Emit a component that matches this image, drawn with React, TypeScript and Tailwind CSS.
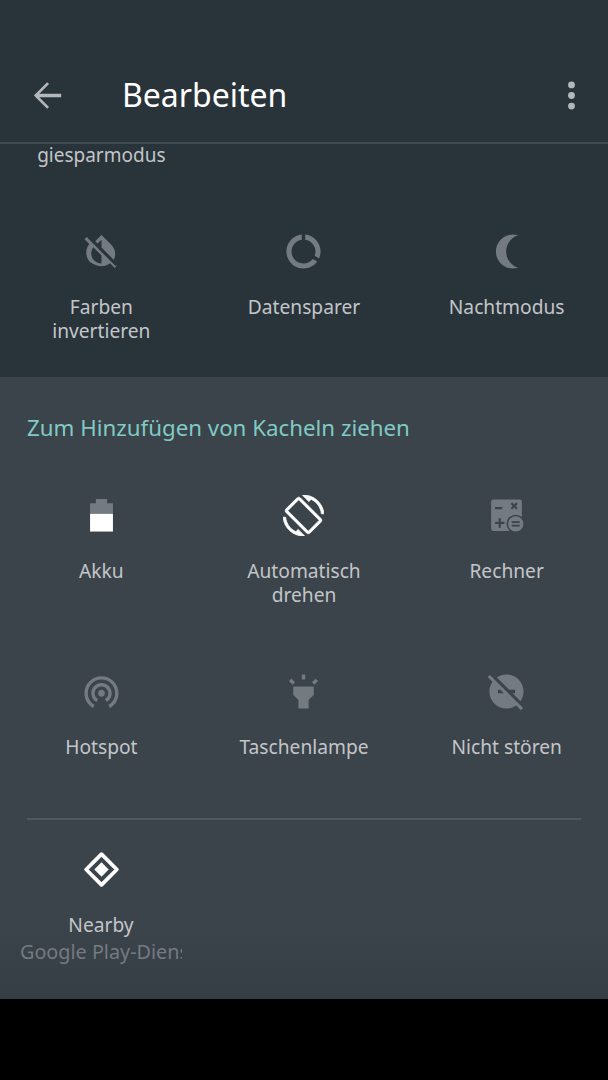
import type { ReactNode } from "react";

const DIM = "#737b80";

function Icon({ children, className = "" }: { children: ReactNode; className?: string }) {
  return (
    <svg viewBox="0 0 24 24" fill={DIM} className={`h-[41px] w-[41px] shrink-0 ${className}`}>
      {children}
    </svg>
  );
}

function Tile({ icon, label }: { icon: ReactNode; label: string[] }) {
  return (
    <div className="flex h-[176px] flex-col items-center">
      <Icon>{icon}</Icon>
      <div className="mt-[23px] text-center text-[19.2px] leading-[24px] text-[#c3c6c8]">
        {label.map((line) => (
          <div key={line}>{line}</div>
        ))}
      </div>
    </div>
  );
}

const invertOff = (
  <path d="M20.65 20.87l-2.35-2.35-6.3-6.3-3.54-3.54-1.42-1.42-3.69-3.69-1.27 1.27 2.78 2.78c-2.55 3.14-2.36 7.76.56 10.69C7.9 19.9 9.95 20.68 12 20.68c1.79 0 3.57-.59 5.03-1.78l2.7 2.7L21 20.33l-.35-.46zM12 19.08c-1.6 0-3.11-.62-4.24-1.76C6.62 16.18 6 14.68 6 13.08c0-1.32.43-2.56 1.21-3.59L12 14.28v4.8zM12 5.1v4.58l7.25 7.26c1.37-2.96.84-6.57-1.6-9.01L12 2.27l-3.7 3.7 1.41 1.41L12 5.1z" />
);
const dataSaver = (
  <path d="M13 2.05v3.03c3.39.49 6 3.39 6 6.92 0 .9-.18 1.75-.48 2.54l2.6 1.53c.56-1.24.88-2.62.88-4.07 0-5.18-3.95-9.45-9-9.95zM12 19c-3.87 0-7-3.13-7-7 0-3.53 2.61-6.43 6-6.92V2.05c-5.06.5-9 4.76-9 9.95 0 5.52 4.47 10 9.99 10 3.31 0 6.24-1.61 8.06-4.09l-2.6-1.53C16.17 17.98 14.21 19 12 19z" />
);
const moon = (
  <path
    transform="matrix(-1 0 0 1 24.8 0)"
    d="M9 2c-1.05 0-2.05.16-3 .46 4.06 1.27 7 5.06 7 9.54 0 4.48-2.94 8.27-7 9.54.95.3 1.95.46 3 .46 5.52 0 10-4.48 10-10S14.52 2 9 2z"
  />
);
const battery = (
  <>
    <path d="M5.3 4.8h3.4V2.4h6.6v2.4h3.4v6.2H5.3z" />
    <path fill="#fff" d="M5.3 11h13.4v10.4H5.3z" />
  </>
);
const rotation = (
  <path
    fill="#fff"
    stroke="#fff"
    strokeWidth="0.45"
    d="M16.48 2.52c3.27 1.55 5.61 4.72 5.97 8.48h1.5C23.44 4.84 18.29 0 12 0l-.66.03 3.81 3.81 1.33-1.32zm-6.25-.77c-.59-.59-1.54-.59-2.12 0L1.75 8.11c-.59.59-.59 1.54 0 2.12l12.02 12.02c.59.59 1.54.59 2.12 0l6.36-6.36c.59-.59.59-1.54 0-2.12L10.23 1.75zm4.6 19.44L2.81 9.17l6.36-6.36 12.02 12.02-6.36 6.36zm-7.31.29C4.25 19.94 1.91 16.76 1.55 13H.05C.56 19.16 5.71 24 12 24l.66-.03-3.81-3.81-1.33 1.32z"
  />
);
const calculator = (
  <>
    <path d="M4.2 2.6h15.6a1.2 1.2 0 0 1 1.2 1.2V14h-7v7H4.2A1.2 1.2 0 0 1 3 19.8V3.8a1.2 1.2 0 0 1 1.2-1.2z" />
    <circle cx="17.4" cy="16.9" r="5.4" fill="#3b434b" />
    <circle cx="17.4" cy="16.9" r="4.5" />
    <path
      fill="#3b434b"
      d="M15.1 15.4h4.6v1h-4.6zM15.1 17.4h4.6v1h-4.6zM5.3 7h4.2v1.3H5.3zM5.3 15.7h2.1v-2.1h1.3v2.1h2.1V17H8.7v2.1H7.4V17H5.3zM14.4 5.2l.9-.9 1.2 1.2 1.2-1.2.9.9-1.2 1.2 1.2 1.2-.9.9-1.2-1.2-1.2 1.2-.9-.9 1.2-1.2z"
    />
  </>
);
const hotspot = (
  <path d="M12 11c-1.1 0-2 .9-2 2s.9 2 2 2 2-.9 2-2-.9-2-2-2zm6 2c0-3.31-2.69-6-6-6s-6 2.69-6 6c0 2.22 1.21 4.15 3 5.19l1-1.74c-1.19-.7-2-1.97-2-3.45 0-2.21 1.79-4 4-4s4 1.79 4 4c0 1.48-.81 2.75-2 3.45l1 1.74c1.79-1.04 3-2.97 3-5.19zM12 3C6.48 3 2 7.48 2 13c0 3.7 2.01 6.92 4.99 8.65l1-1.73C5.61 18.53 4 15.96 4 13c0-4.42 3.58-8 8-8s8 3.58 8 8c0 2.96-1.61 5.53-4 6.92l1 1.73c2.99-1.73 5-4.95 5-8.65 0-5.52-4.48-10-10-10z" />
);
const flashlight = (
  <path d="M6 14l3 3v5h6v-5l3-3V9H6v5zm5-12h2v3h-2V2zM3.5 5.875L4.914 4.46l2.12 2.122L5.62 7.997zm13.46.71l2.123-2.12 1.414 1.414L18.375 8z" />
);
const dndOff = (
  <path d="M17 11v2h-1.46l4.68 4.68C21.34 16.07 22 14.11 22 12c0-5.52-4.48-10-10-10-2.11 0-4.07.66-5.68 1.78L13.54 11H17zM2.27 2.27L1 3.54l2.78 2.78C2.66 7.93 2 9.89 2 12c0 5.52 4.48 10 10 10 2.11 0 4.07-.66 5.68-1.78L20.46 23l1.27-1.27L11 11 2.27 2.27zM7 13v-2h1.46l2 2H7z" />
);
const nearby = (
  <>
    <path d="M12 3L21 12 12 21 3 12z" fill="none" stroke="#fff" strokeWidth="2.2" strokeLinejoin="round" />
    <path d="M12 7.8L16.2 12 12 16.2 7.8 12z" fill="#fff" />
  </>
);

export default function App() {
  return (
    <div className="flex h-[1080px] w-[608px] flex-col overflow-hidden bg-black font-['Noto_Sans',sans-serif]">
      <div className="h-[377px] bg-[#29333a]">
        <header className="flex h-[144px] items-center border-b-2 border-[#424b51] pt-[48px]">
          <svg viewBox="0 0 24 24" fill="#b4b8bb" className="ml-[27px] h-[41px] w-[41px]">
            <path d="M20 11H7.2l5.7-5.7-1.1-1.1L4 12l7.8 7.8 1.1-1.1L7.2 13H20z" />
          </svg>
          <h1 className="ml-[54px] text-[32px] leading-[40px] text-white">Bearbeiten</h1>
          <svg viewBox="0 0 24 24" fill="#b4b8bb" className="ml-auto mr-[16px] h-[41px] w-[41px]">
            <circle cx="12" cy="5.8" r="2" />
            <circle cx="12" cy="12" r="2" />
            <circle cx="12" cy="18.2" r="2" />
          </svg>
        </header>
        <div className="-mt-px grid grid-cols-3">
          <div className="text-center text-[19px] leading-[24px] text-[#c3c6c8]">giesparmodus</div>
        </div>
        <div className="mt-[64px] grid grid-cols-3">
          <Tile icon={invertOff} label={["Farben", "invertieren"]} />
          <Tile icon={dataSaver} label={["Datensparer"]} />
          <Tile icon={moon} label={["Nachtmodus"]} />
        </div>
      </div>

      <div className="h-[622px] bg-gradient-to-b from-[#3b434b] from-[88%] to-[#363e45]">
        <h2 className="pl-[27px] pt-[35px] text-[22.3px] leading-[32px] text-[#80cbc4]">
          Zum Hinzufügen von Kacheln ziehen
        </h2>
        <div className="mt-[51px] grid grid-cols-3">
          <Tile icon={battery} label={["Akku"]} />
          <Tile icon={rotation} label={["Automatisch", "drehen"]} />
          <Tile icon={calculator} label={["Rechner"]} />
          <Tile icon={hotspot} label={["Hotspot"]} />
          <Tile icon={flashlight} label={["Taschenlampe"]} />
          <Tile icon={dndOff} label={["Nicht stören"]} />
        </div>
        <div className="mx-[27px] -mt-[29px] border-t-2 border-[#50585e]" />
        <div className="mt-[29px] flex w-[202px] flex-col items-center">
          <Icon>{nearby}</Icon>
          <div className="mt-[23px] text-[19.2px] leading-[24px] text-[#c3c6c8]">Nearby</div>
          <div className="mt-[3px] w-[162px] overflow-hidden whitespace-nowrap text-[19.8px] leading-[24px] text-[#737b80]">
            Google Play-Dienste
          </div>
        </div>
      </div>
    </div>
  );
}
